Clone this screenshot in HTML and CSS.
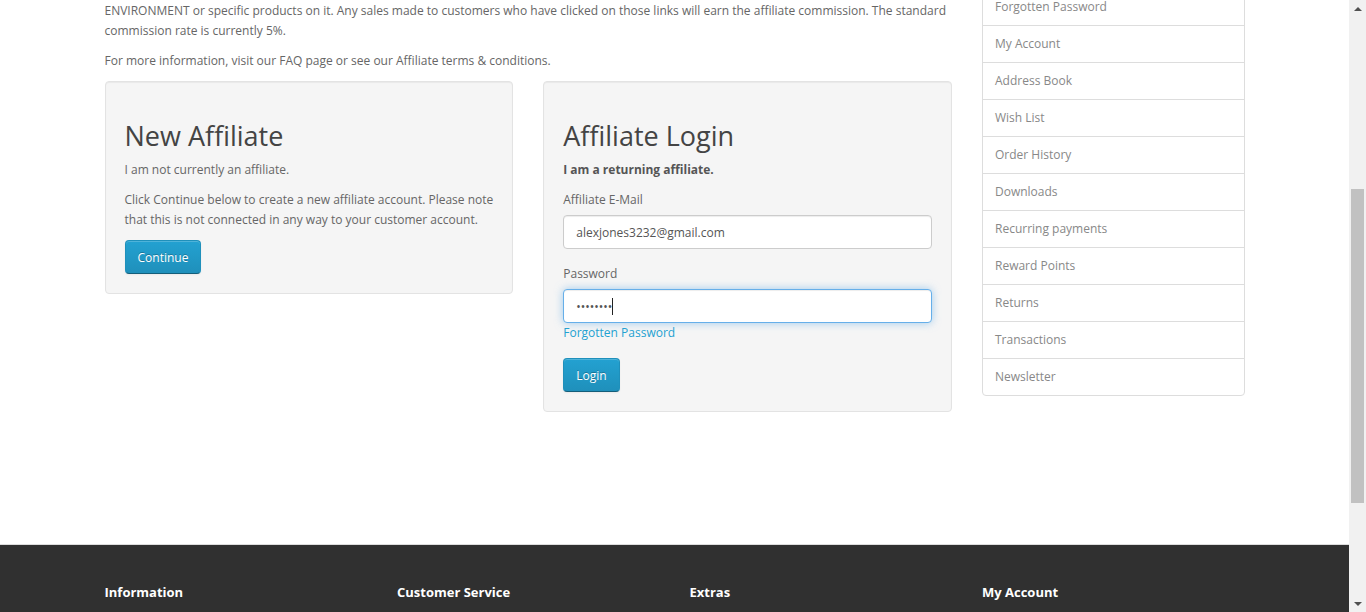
FILE: index.html
```html
<!DOCTYPE html>
<html lang="en">
<head>
<meta charset="utf-8">
<title>Affiliate Program</title>
<link rel="stylesheet" href="styles.css">
</head>
<body>
<div class="page">
  <div class="main">
    <div class="container">
      <div class="row">
        <div class="content">
          <p>ENVIRONMENT or specific products on it. Any sales made to customers who have clicked on those links will earn the affiliate commission. The standard commission rate is currently 5%.</p>
          <p>For more information, visit our FAQ page or see our Affiliate terms &amp; conditions.</p>
          <div class="wells">
            <div class="half">
              <div class="well">
                <h2>New Affiliate</h2>
                <p>I am not currently an affiliate.</p>
                <p>Click Continue below to create a new affiliate account. Please note that this is not connected in any way to your customer account.</p>
                <a href="#" class="btn">Continue</a>
              </div>
            </div>
            <div class="half">
              <div class="well">
                <h2>Affiliate Login</h2>
                <p><strong>I am a returning affiliate.</strong></p>
                <form class="login-form" action="#">
                  <div class="form-group">
                    <label class="control-label" for="input-email">Affiliate E-Mail</label>
                    <input type="text" id="input-email" class="form-control" value="alexjones3232@gmail.com">
                  </div>
                  <div class="form-group">
                    <label class="control-label" for="input-password">Password</label>
                    <div class="input-wrap">
                      <input type="password" id="input-password" class="form-control focused" value="12345678">
                      <span class="caret"></span>
                    </div>
                    <a href="#" class="link">Forgotten Password</a>
                  </div>
                  <button type="button" class="btn">Login</button>
                </form>
              </div>
            </div>
          </div>
        </div>
        <aside class="aside">
          <div class="list-group">
            <a href="#" class="list-item">Forgotten Password</a>
            <a href="#" class="list-item">My Account</a>
            <a href="#" class="list-item">Address Book</a>
            <a href="#" class="list-item">Wish List</a>
            <a href="#" class="list-item">Order History</a>
            <a href="#" class="list-item">Downloads</a>
            <a href="#" class="list-item">Recurring payments</a>
            <a href="#" class="list-item">Reward Points</a>
            <a href="#" class="list-item">Returns</a>
            <a href="#" class="list-item">Transactions</a>
            <a href="#" class="list-item">Newsletter</a>
          </div>
        </aside>
      </div>
    </div>
  </div>
  <footer class="footer">
    <div class="container">
      <div class="footer-row">
        <div class="footer-col"><h5>Information</h5></div>
        <div class="footer-col"><h5>Customer Service</h5></div>
        <div class="footer-col"><h5>Extras</h5></div>
        <div class="footer-col"><h5>My Account</h5></div>
      </div>
    </div>
  </footer>
</div>
<div class="scrollbar">
  <div class="sb-btn"><span class="arrow-up"></span></div>
  <div class="sb-track"><div class="sb-thumb"></div></div>
  <div class="sb-btn"><span class="arrow-down"></span></div>
</div>
</body>
</html>
```
FILE: styles.css
```css
* { box-sizing: border-box; }
html, body { height: 612px; }
body {
  margin: 0;
  overflow: hidden;
  display: flex;
  font-family: "Open Sans", "DejaVu Sans", sans-serif;
  font-size: 12px;
  line-height: 20px;
  color: #666;
  background: #fff;
}
.page {
  flex: 1;
  min-width: 0;
  display: flex;
  flex-direction: column;
  overflow: hidden;
}
.container {
  width: 1170px;
  margin: 0 auto;
  padding: 0 15px;
}
.row {
  display: flex;
  margin: 0 -15px;
}
.content {
  width: 877.5px;
  padding: 1px 15px 0;
  min-height: 514px;
}
.aside {
  width: 292.5px;
  padding: 0 15px;
  overflow: hidden;
}
p { margin: 0 0 10px; }
.wells {
  display: flex;
  margin: 0 -15px;
  align-items: flex-start;
}
.half {
  width: 50%;
  padding: 0 15px;
}
.well {
  padding: 19px;
  margin-bottom: 20px;
  background: #f5f5f5;
  border: 1px solid #e3e3e3;
  border-radius: 4px;
  box-shadow: inset 0 1px 1px rgba(0,0,0,.05);
}
.well h2 {
  margin: 20px 0 9px;
  font-size: 27px;
  font-weight: 400;
  line-height: 1.1;
  color: #444;
}
.well strong { color: #555; }
.btn {
  display: inline-block;
  padding: 8.5px 12px 6.5px;
  font-family: inherit;
  font-size: 12px;
  line-height: 1.42857;
  color: #fff;
  text-decoration: none;
  text-shadow: 0 -1px 0 rgba(0,0,0,.25);
  background: linear-gradient(to bottom, #23a1d1, #1f90bb);
  border: 1px solid;
  border-color: #1f90bb #1f90bb #145e7a;
  border-radius: 4px;
  box-shadow: inset 0 1px 0 rgba(255,255,255,.2), 0 1px 2px rgba(0,0,0,.05);
  cursor: pointer;
}
.form-group { margin-bottom: 15px; }
.control-label {
  display: inline-block;
  margin-bottom: 5px;
  font-weight: 400;
}
.input-wrap { position: relative; }
.form-control {
  display: block;
  width: 100%;
  height: 34px;
  padding: 7px 12px 5px;
  font-family: inherit;
  font-size: 12px;
  line-height: 1.42857;
  color: #555;
  background: #fff;
  border: 1px solid #ccc;
  border-radius: 4px;
  box-shadow: inset 0 1px 1px rgba(0,0,0,.075);
  outline: none;
}
.form-control.focused,
.form-control:focus {
  border-color: #66afe9;
  box-shadow: inset 0 1px 1px rgba(0,0,0,.075), 0 0 8px rgba(102,175,233,.6);
}
.caret {
  position: absolute;
  left: 49px;
  top: 9px;
  width: 1px;
  height: 17px;
  background: #222;
}
.link {
  display: block;
  color: #23a1d1;
  text-decoration: none;
}
.list-group {
  display: flex;
  flex-direction: column;
  margin-top: -12px;
  margin-bottom: 20px;
}
.list-item {
  display: block;
  padding: 8px 12px;
  margin-bottom: -1px;
  border: 1px solid #ddd;
  color: #888;
  text-decoration: none;
  background: #fff;
}
.list-item:first-child { border-radius: 4px 4px 0 0; }
.list-item:last-child { border-radius: 0 0 4px 4px; margin-bottom: 0; }
.footer {
  flex: 1;
  margin-top: 30px;
  padding-top: 30px;
  background: #303030;
  border-top: 1px solid #ddd;
  color: #e2e2e2;
}
.footer-row {
  display: flex;
  margin: 0 -15px;
}
.footer-col {
  width: 25%;
  padding: 0 15px;
}
.footer h5 {
  margin: 10px 0;
  font-size: 13px;
  font-weight: 700;
  line-height: 1.1;
  color: #fff;
}
.scrollbar {
  width: 17px;
  flex: none;
  display: flex;
  flex-direction: column;
  background: #f1f1f1;
}
.sb-btn {
  height: 17px;
  display: flex;
  align-items: center;
  justify-content: center;
}
.arrow-up {
  width: 0;
  height: 0;
  border-left: 4px solid transparent;
  border-right: 4px solid transparent;
  border-bottom: 4px solid #505050;
}
.arrow-down {
  width: 0;
  height: 0;
  border-left: 4px solid transparent;
  border-right: 4px solid transparent;
  border-top: 4px solid #505050;
}
.sb-track {
  flex: 1;
  padding: 0 2px;
}
.sb-thumb {
  margin-top: 172px;
  height: 314px;
  background: #c1c1c1;
}
```
